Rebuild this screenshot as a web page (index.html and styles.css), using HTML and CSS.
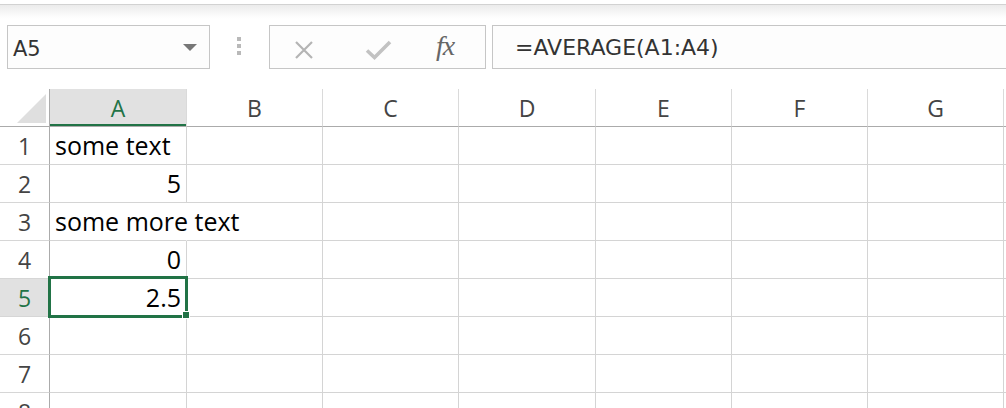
FILE: index.html
```html
<!DOCTYPE html>
<html lang="en">
<head>
    <meta charset="UTF-8">
    <title>Sheet1</title>
    <link rel="stylesheet" href="styles.css">
</head>
<body>

    <div class="ribbon-edge"></div>

    <!-- Name box + formula bar -->
    <div class="toolbar">
        <div class="name-box">
            <span class="name-text">A5</span>
            <span class="drop-arrow"></span>
        </div>

        <div class="grip">
            <span></span><span></span><span></span>
        </div>

        <div class="fn-buttons">
            <svg class="icon-cancel" width="18" height="18" viewBox="0 0 18 18">
                <path d="M1 1 L17 17 M17 1 L1 17" stroke="#b4b4b4" stroke-width="2.2" fill="none"/>
            </svg>
            <svg class="icon-enter" width="27" height="20" viewBox="0 0 27 20">
                <path d="M2 10.5 L9.5 17.5 L25 2" stroke="#c2c2c2" stroke-width="3.6" fill="none"/>
            </svg>
            <span class="icon-fx">fx</span>
        </div>

        <div class="formula-box">=AVERAGE(A1:A4)</div>
    </div>

    <!-- Worksheet grid -->
    <div class="sheet">
        <div class="corner"><span class="corner-tri"></span></div>
        <div class="col-hdr active">A</div>
        <div class="col-hdr">B</div>
        <div class="col-hdr">C</div>
        <div class="col-hdr">D</div>
        <div class="col-hdr">E</div>
        <div class="col-hdr">F</div>
        <div class="col-hdr">G</div>
        <div class="col-hdr last"></div>

        <div class="row-hdr">1</div>
        <div class="cell overflow">some text</div>
        <div class="cell"></div><div class="cell"></div><div class="cell"></div><div class="cell"></div><div class="cell"></div><div class="cell"></div><div class="cell last"></div>

        <div class="row-hdr">2</div>
        <div class="cell num">5</div>
        <div class="cell"></div><div class="cell"></div><div class="cell"></div><div class="cell"></div><div class="cell"></div><div class="cell"></div><div class="cell last"></div>

        <div class="row-hdr">3</div>
        <div class="cell overflow spill">some more text</div>
        <div class="cell"></div><div class="cell"></div><div class="cell"></div><div class="cell"></div><div class="cell"></div><div class="cell"></div><div class="cell last"></div>

        <div class="row-hdr">4</div>
        <div class="cell num">0</div>
        <div class="cell"></div><div class="cell"></div><div class="cell"></div><div class="cell"></div><div class="cell"></div><div class="cell"></div><div class="cell last"></div>

        <div class="row-hdr active">5</div>
        <div class="cell num">2.5</div>
        <div class="cell"></div><div class="cell"></div><div class="cell"></div><div class="cell"></div><div class="cell"></div><div class="cell"></div><div class="cell last"></div>

        <div class="row-hdr">6</div>
        <div class="cell"></div>
        <div class="cell"></div><div class="cell"></div><div class="cell"></div><div class="cell"></div><div class="cell"></div><div class="cell"></div><div class="cell last"></div>

        <div class="row-hdr">7</div>
        <div class="cell"></div>
        <div class="cell"></div><div class="cell"></div><div class="cell"></div><div class="cell"></div><div class="cell"></div><div class="cell"></div><div class="cell last"></div>

        <div class="row-hdr">8</div>
        <div class="cell"></div>
        <div class="cell"></div><div class="cell"></div><div class="cell"></div><div class="cell"></div><div class="cell"></div><div class="cell"></div><div class="cell last"></div>

        <!-- active cell outline -->
        <div class="selection"></div>
        <div class="fill-handle"></div>
    </div>

</body>
</html>
```

FILE: styles.css
```css
/* Page */
body {
    margin: 0;
    background-color: #fff;
    font-family: 'Open Sans', sans-serif;
    overflow: hidden;
    height: 408px;
}

.ribbon-edge {
    height: 4px;
    border-bottom: 1px solid #d2d2d2;
    background-color: #fff;
}

/* Formula bar */
.toolbar {
    display: flex;
    align-items: flex-start;
    padding: 20px 0 20px 7px;
    background: linear-gradient(#ebebeb, #fdfdfd 12px, #fff 14px);
    font-family: 'DejaVu Sans', sans-serif;
    color: #333;
}

.name-box,
.fn-buttons,
.formula-box {
    height: 42px;
    border: 1px solid #c6c6c6;
    background-color: #fdfdfd;
    box-sizing: content-box;
}

.name-box {
    display: flex;
    align-items: center;
    justify-content: space-between;
    padding: 0 12px 0 0;
    width: 189px;
}

.name-text {
    font-size: 21px;
    padding-left: 5px;
    padding-top: 3px;
}

.drop-arrow {
    width: 0;
    height: 0;
    border-left: 7px solid transparent;
    border-right: 7px solid transparent;
    border-top: 7px solid #777;
    margin-top: 1px;
}

.grip {
    display: flex;
    flex-direction: column;
    gap: 3px;
    margin: 12px 28px 0 27px;
}

.grip span {
    display: block;
    width: 4px;
    height: 4px;
    background-color: #b9b9b9;
}

.fn-buttons {
    width: 215px;
    position: relative;
}

.icon-cancel {
    position: absolute;
    left: 25px;
    top: 15px;
}

.icon-enter {
    position: absolute;
    left: 95px;
    top: 14px;
}

.icon-fx {
    position: absolute;
    left: 166px;
    top: 4px;
    font-family: 'Liberation Serif', serif;
    font-style: italic;
    font-size: 28px;
    color: #666;
    letter-spacing: -1px;
}

.formula-box {
    margin-left: 6px;
    flex: 1;
    margin-right: -4px;
    font-size: 22px;
    line-height: 42px;
    padding-left: 22px;
    padding-top: 1px;
    height: 41px;
}

/* Worksheet */
.sheet {
    position: relative;
    display: grid;
    grid-template-columns: 50px 137px 136px 136px 137px 136px 136px 136px 1fr;
    grid-auto-rows: 38px;
}

.corner {
    position: relative;
    border-right: 1px solid #ababab;
    border-bottom: 1px solid #ababab;
}

.corner-tri {
    position: absolute;
    right: 3px;
    bottom: 3px;
    width: 0;
    height: 0;
    border-left: 29px solid transparent;
    border-bottom: 29px solid #dfdfdf;
}

.col-hdr {
    border-right: 1px solid #dadada;
    border-bottom: 1px solid #ababab;
    text-align: center;
    font-size: 23px;
    line-height: 35px;
    padding-top: 2px;
    color: #444;
}

.col-hdr.active {
    background-color: #e1e1e1;
    color: #217346;
    box-shadow: inset 0 -2px 0 #217346;
}

.row-hdr {
    border-right: 1px solid #ababab;
    border-bottom: 1px solid #d6d6d6;
    text-align: center;
    font-size: 23px;
    line-height: 35px;
    padding-top: 2px;
    color: #444;
}

.row-hdr.active {
    background-color: #e1e1e1;
    color: #217346;
}

.cell {
    border-right: 1px solid #d4d4d4;
    border-bottom: 1px solid #d4d4d4;
    font-size: 25px;
    line-height: 37px;
    color: #000;
    padding: 0 5px;
    white-space: nowrap;
}

.cell.overflow {
    overflow: visible;
    position: relative;
    z-index: 1;
}

.cell.spill {
    background-color: #fff;
    border-right-color: #fff;
}

.cell.last {
    border-right: none;
}

.num {
    text-align: right;
}

.selection {
    position: absolute;
    left: 48px;
    top: 187px;
    width: 134px;
    height: 36px;
    border: 3px solid #217346;
    z-index: 2;
}

.fill-handle {
    position: absolute;
    left: 182px;
    top: 222px;
    width: 6px;
    height: 6px;
    background-color: #217346;
    border: 1px solid #fff;
    z-index: 3;
}
```
